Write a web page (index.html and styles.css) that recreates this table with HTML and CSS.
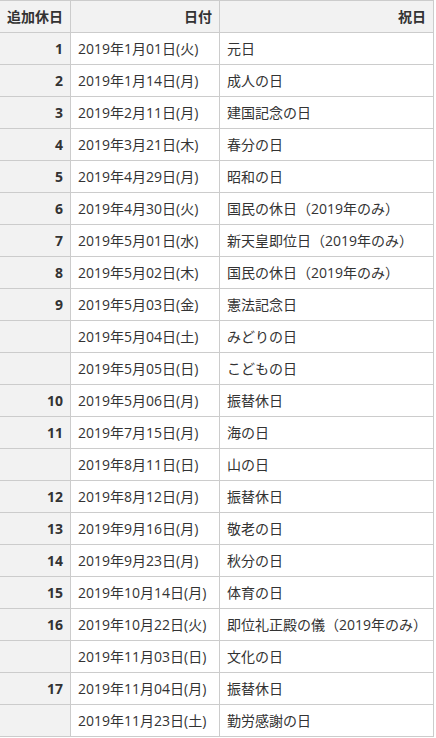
FILE: index.html
```html
<!DOCTYPE html>
<html lang="ja">
<head>
<meta charset="utf-8">
<link rel="stylesheet" href="styles.css">
</head>
<body>
<table class="holidays">
<thead>
<tr><th class="num">追加休日</th><th class="date">日付</th><th class="name">祝日</th></tr>
</thead>
<tbody>
<tr><td class="num">1</td><td>2019年1月01日(火)</td><td>元日</td></tr>
<tr><td class="num">2</td><td>2019年1月14日(月)</td><td>成人の日</td></tr>
<tr><td class="num">3</td><td>2019年2月11日(月)</td><td>建国記念の日</td></tr>
<tr><td class="num">4</td><td>2019年3月21日(木)</td><td>春分の日</td></tr>
<tr><td class="num">5</td><td>2019年4月29日(月)</td><td>昭和の日</td></tr>
<tr><td class="num">6</td><td>2019年4月30日(火)</td><td>国民の休日（2019年のみ）</td></tr>
<tr><td class="num">7</td><td>2019年5月01日(水)</td><td>新天皇即位日（2019年のみ）</td></tr>
<tr><td class="num">8</td><td>2019年5月02日(木)</td><td>国民の休日（2019年のみ）</td></tr>
<tr><td class="num">9</td><td>2019年5月03日(金)</td><td>憲法記念日</td></tr>
<tr><td class="num"></td><td>2019年5月04日(土)</td><td>みどりの日</td></tr>
<tr><td class="num"></td><td>2019年5月05日(日)</td><td>こどもの日</td></tr>
<tr><td class="num">10</td><td>2019年5月06日(月)</td><td>振替休日</td></tr>
<tr><td class="num">11</td><td>2019年7月15日(月)</td><td>海の日</td></tr>
<tr><td class="num"></td><td>2019年8月11日(日)</td><td>山の日</td></tr>
<tr><td class="num">12</td><td>2019年8月12日(月)</td><td>振替休日</td></tr>
<tr><td class="num">13</td><td>2019年9月16日(月)</td><td>敬老の日</td></tr>
<tr><td class="num">14</td><td>2019年9月23日(月)</td><td>秋分の日</td></tr>
<tr><td class="num">15</td><td>2019年10月14日(月)</td><td>体育の日</td></tr>
<tr><td class="num">16</td><td>2019年10月22日(火)</td><td>即位礼正殿の儀（2019年のみ）</td></tr>
<tr><td class="num"></td><td>2019年11月03日(日)</td><td>文化の日</td></tr>
<tr><td class="num">17</td><td>2019年11月04日(月)</td><td>振替休日</td></tr>
<tr><td class="num"></td><td>2019年11月23日(土)</td><td>勤労感謝の日</td></tr>
</tbody>
</table>
</body>
</html>
```
FILE: styles.css
```css
html, body {
  margin: 0;
  padding: 0;
  background: #fff;
}
body {
  font-family: "Open Sans", "Noto Sans CJK JP", sans-serif;
  font-size: 14px;
  color: #333;
}
.holidays {
  border-collapse: collapse;
  margin-left: -1px;
  width: 435px;
  table-layout: fixed;
}
.holidays th,
.holidays td {
  border: 1px solid #ccc;
  height: 32px;
  padding: 0 7px;
  line-height: 20px;
  box-sizing: border-box;
  white-space: nowrap;
}
.holidays th {
  background: #f2f2f2;
  font-weight: bold;
  text-align: right;
}
.holidays th.num { width: 71px; }
.holidays th.date { width: 149px; }
.holidays td.num {
  background: #f2f2f2;
  font-weight: bold;
  text-align: right;
}
```
